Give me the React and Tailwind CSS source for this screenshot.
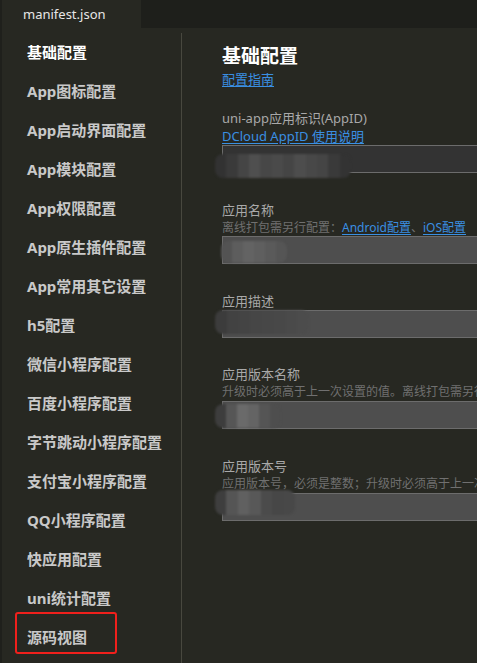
import React from 'react';

const menu = [
    '基础配置',
    'App图标配置',
    'App启动界面配置',
    'App模块配置',
    'App权限配置',
    'App原生插件配置',
    'App常用其它设置',
    'h5配置',
    '微信小程序配置',
    '百度小程序配置',
    '字节跳动小程序配置',
    '支付宝小程序配置',
    'QQ小程序配置',
    '快应用配置',
    'uni统计配置',
    '源码视图',
];

// blurred redaction over the input values
const Smudge = ({ className, cells }) => (
    <div className={`absolute flex overflow-hidden rounded-[8px] blur-[1px] ${className}`}>
        {cells.map((c, i) => (
            <div key={i} className="h-full w-[12px]" style={{ background: c }} />
        ))}
    </div>
);

const Field = ({ dark, children }) => (
    <div className={`relative h-[28px] w-[320px] border border-[#6c6c6c] ${dark ? 'bg-[#333333]' : 'bg-[#4e4e4e]'}`}>
        {children}
    </div>
);

const Link = ({ children }) => (
    <span className="text-[#3a8fe2] underline underline-offset-2">{children}</span>
);

export default function App() {
    return (
        <div
            className="w-[477px] h-[663px] overflow-hidden bg-[#272822] border-l-2 border-[#1f201c] flex flex-col"
            style={{ fontFamily: '"Noto Sans", "Noto Sans CJK SC", sans-serif' }}
        >
            {/* tab bar */}
            <div className="h-[28px] flex shrink-0 bg-[#1e1f1b]">
                <div className="w-[139px] bg-[#272822] pl-[21px] text-[13px] leading-[28px] text-[#e6e6e6]">
                    manifest.json
                </div>
            </div>

            <div className="flex flex-1 min-h-0">
                {/* sidebar */}
                <div className="w-[179px] shrink-0 pt-[5px]">
                    {menu.map((item, i) => (
                        <div
                            key={item}
                            className={`relative h-[39px] pl-[25px] text-[15px] font-bold leading-[39px] ${i === 0 ? 'text-white' : 'text-[#c9c9c9]'}`}
                        >
                            {item}
                            {item === '源码视图' && (
                                <div className="absolute left-[13px] top-[-6px] w-[102px] h-[42px] border-2 border-[#f0201c] rounded-[3px]" />
                            )}
                        </div>
                    ))}
                </div>
                <div className="w-px mt-[5px] bg-[#48483f] shrink-0" />

                {/* content */}
                <div className="flex-1 min-w-0 pl-[40px] pt-[16px] text-[13px] leading-[18px] text-[#a9a9a9]">
                    <div className="text-[19px] leading-[24px] font-bold text-white">基础配置</div>
                    <div className="mt-[2px]"><Link>配置指南</Link></div>

                    <div className="mt-[21px]">
                        <div>uni-app应用标识(AppID)</div>
                        <div><Link>DCloud AppID 使用说明</Link></div>
                        <Field dark>
                            <Smudge
                                className="left-[-8px] top-[8px] w-[136px] h-[24px]"
                                cells={['#323232', '#3a3a3a', '#454545', '#4f4f4f', '#474747', '#4a4a4a', '#454545', '#4d4d4d', '#484848', '#454545', '#3a3a3a', '#333333']}
                            />
                        </Field>
                    </div>

                    <div className="mt-[28px]">
                        <div>应用名称</div>
                        <div className="text-[12px] text-[#707070] -mb-px">
                            离线打包需另行配置：<Link>Android配置</Link>、<Link>iOS配置</Link>
                        </div>
                        <Field>
                            <Smudge
                                className="left-[-2px] top-[4px] w-[66px] h-[22px]"
                                cells={['#535353', '#5d5d5d', '#636363', '#5f5f5f', '#5a5a5a', '#555555']}
                            />
                        </Field>
                    </div>

                    <div className="mt-[28px]">
                        <div>应用描述</div>
                        <Field>
                            <Smudge
                                className="left-[-8px] top-[-1px] w-[94px] h-[24px]"
                                cells={['#3c3c3c', '#424242', '#444444', '#464646', '#474747', '#484848', '#4a4a4a', '#4c4c4c']}
                            />
                        </Field>
                    </div>

                    <div className="mt-[27px]">
                        <div>应用版本名称</div>
                        <div className="text-[12px] text-[#707070] whitespace-nowrap">升级时必须高于上一次设置的值。离线打包需另行配置</div>
                        <Field>
                            <Smudge
                                className="left-[-8px] top-[2px] w-[66px] h-[24px]"
                                cells={['#3d3d3d', '#565656', '#6a6a6a', '#646464', '#555555', '#4e4e4e']}
                            />
                        </Field>
                    </div>

                    <div className="mt-[28px]">
                        <div>应用版本号</div>
                        <div className="text-[12px] text-[#707070] whitespace-nowrap">应用版本号，必须是整数；升级时必须高于上一次设置的值</div>
                        <Field>
                            <Smudge
                                className="left-[-8px] top-[-4px] w-[80px] h-[25px]"
                                cells={['#3e3e3e', '#555555', '#606060', '#585858', '#4b4b4b', '#474747', '#484848']}
                            />
                        </Field>
                    </div>
                </div>
            </div>
        </div>
    );
}
